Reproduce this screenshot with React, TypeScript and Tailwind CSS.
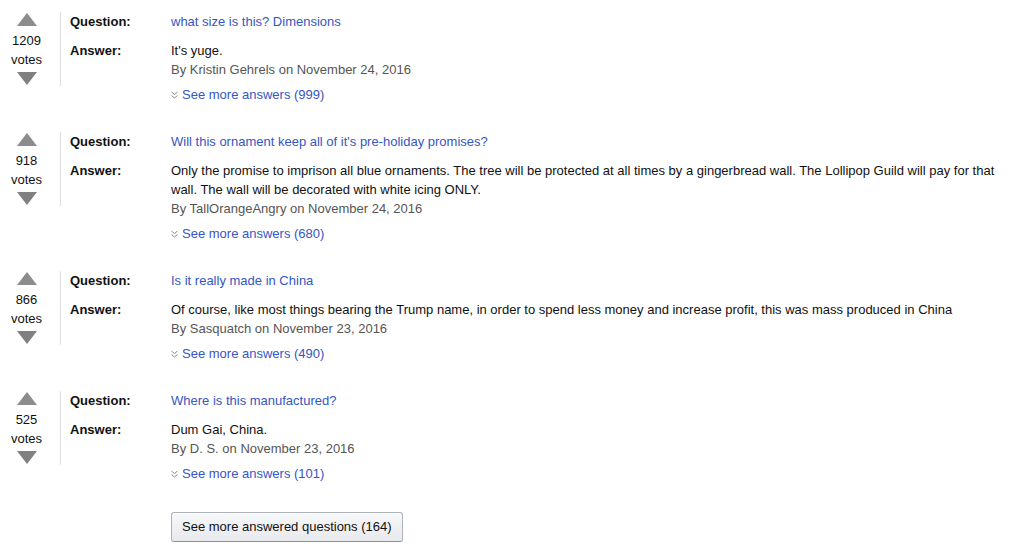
import React from "react";

type QA = {
  votes: string;
  question: string;
  answer: string;
  by: string;
  date: string;
  more: string;
};

const data: QA[] = [
  {
    votes: "1209",
    question: "what size is this? Dimensions",
    answer: "It's yuge.",
    by: "Kristin Gehrels",
    date: "November 24, 2016",
    more: "999",
  },
  {
    votes: "918",
    question: "Will this ornament keep all of it's pre-holiday promises?",
    answer:
      "Only the promise to imprison all blue ornaments. The tree will be protected at all times by a gingerbread wall. The Lollipop Guild will pay for that wall. The wall will be decorated with white icing ONLY.",
    by: "TallOrangeAngry",
    date: "November 24, 2016",
    more: "680",
  },
  {
    votes: "866",
    question: "Is it really made in China",
    answer:
      "Of course, like most things bearing the Trump name, in order to spend less money and increase profit, this was mass produced in China",
    by: "Sasquatch",
    date: "November 23, 2016",
    more: "490",
  },
  {
    votes: "525",
    question: "Where is this manufactured?",
    answer: "Dum Gai, China.",
    by: "D. S.",
    date: "November 23, 2016",
    more: "101",
  },
];

function Up() {
  return (
    <svg width="20" height="13" viewBox="0 0 20 13">
      <polygon points="10,0 20,13 0,13" fill="#8c8c8c" />
    </svg>
  );
}
function Down() {
  return (
    <svg width="20" height="13" viewBox="0 0 20 13">
      <polygon points="0,0 20,0 10,13" fill="#808080" />
    </svg>
  );
}
function Chev() {
  return (
    <svg width="7" height="8" viewBox="0 0 7 8" className="mr-[4px] mt-[1px]">
      <polyline points="0.5,1 3.5,3.5 6.5,1" fill="none" stroke="#888" strokeWidth="1" />
      <polyline points="0.5,4.5 3.5,7 6.5,4.5" fill="none" stroke="#888" strokeWidth="1" />
    </svg>
  );
}

function Block({ q }: { q: QA }) {
  return (
    <div className="flex items-start">
      <div className="w-[61px] shrink-0 pr-[7px] border-r border-[#dddddd] flex flex-col items-center pt-[1px] pb-[1px]">
        <Up />
        <div className="leading-[19px] mt-[5px]">{q.votes}</div>
        <div className="leading-[19px]">votes</div>
        <div className="mt-[3px] flex">
          <Down />
        </div>
      </div>
      <div className="ml-[9px] flex-1 min-w-0">
        <div className="flex leading-[19px]">
          <div className="w-[101px] shrink-0 font-bold">Question:</div>
          <div className="text-[#3556c4]">{q.question}</div>
        </div>
        <div className="flex leading-[19px] mt-[10px]">
          <div className="w-[101px] shrink-0 font-bold">Answer:</div>
          <div className="flex-1 min-w-0 pr-[8px]">
            <div>{q.answer}</div>
            <div className="text-[#555555]">
              By {q.by} on {q.date}
            </div>
            <div className="mt-[6px] flex items-center text-[#3556c4]">
              <Chev />
              <span>See more answers ({q.more})</span>
            </div>
          </div>
        </div>
      </div>
    </div>
  );
}

export default function App() {
  return (
    <div
      className="w-[1015px] h-[555px] bg-white text-[13px] text-[#111111] overflow-hidden"
      style={{ fontFamily: '"Liberation Sans", Arial, sans-serif' }}
    >
      <div className="pt-[12px] flex flex-col gap-[28px]">
        {data.map((q) => (
          <Block key={q.votes} q={q} />
        ))}
      </div>
      <div className="pl-[171px] mt-[29px]">
        <button className="h-[30px] px-[10px] rounded-[3px] border border-[#adb1b8] border-b-[#8d9096] bg-gradient-to-b from-[#f7f8fa] to-[#e7e9ec] text-[13px] text-[#111111] shadow-[inset_0_1px_0_rgba(255,255,255,0.6)]">
          See more answered questions (164)
        </button>
      </div>
    </div>
  );
}
